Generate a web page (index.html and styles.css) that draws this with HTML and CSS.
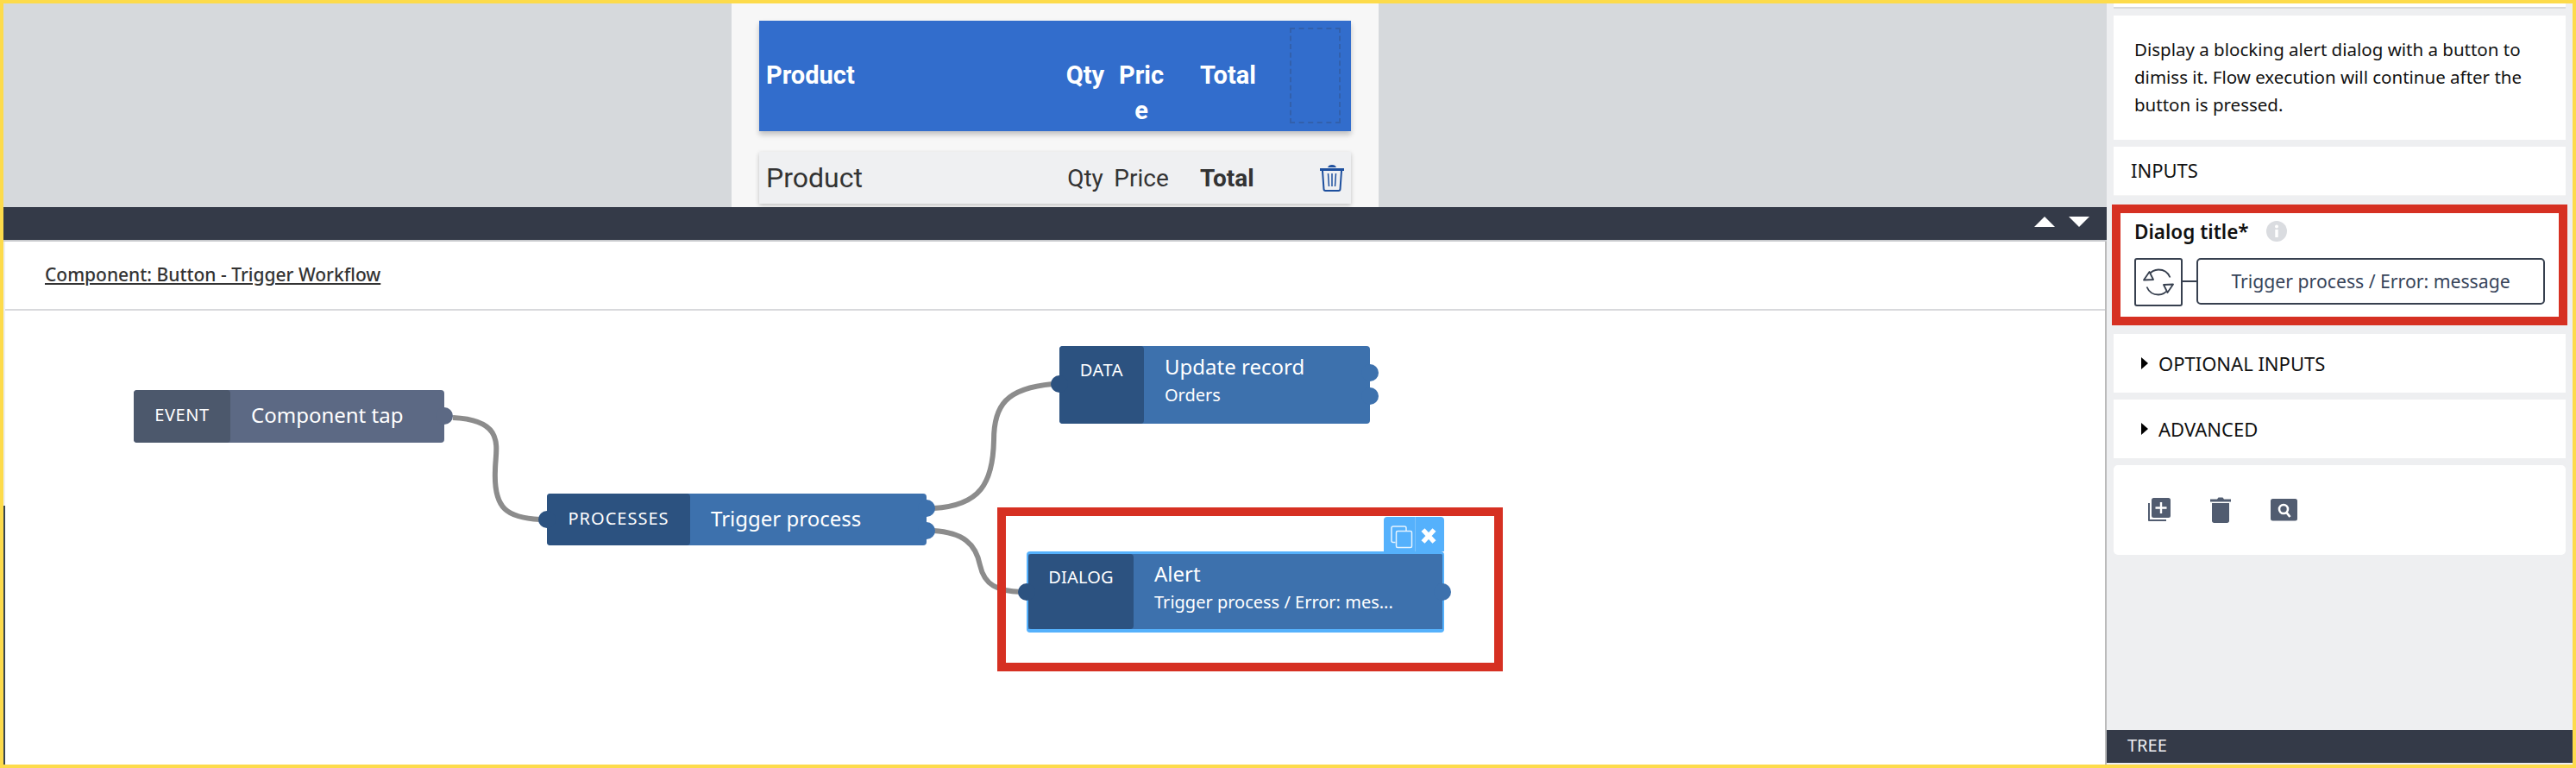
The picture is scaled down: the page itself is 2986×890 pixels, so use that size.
FILE: index.html
```html
<!DOCTYPE html>
<html lang="en">
<head>
	<meta charset="UTF-8">
	<meta name="viewport" content="width=device-width, initial-scale=1.0">
	<title>Flow editor</title>
	<link rel="stylesheet" href="styles.css">
</head>
<body>
<div class="frame">
	<div class="main">
		<div class="preview">
			<div class="phone">
				<div class="line line-head">
					<div>Product</div>
					<div class="mid">Qty</div>
					<div class="mid price-head">Price</div>
					<div class="total">Total</div>
					<div class="drop"></div>
				</div>
				<div class="line line-row">
					<div class="name">Product</div>
					<div class="mid">Qty</div>
					<div class="mid">Price</div>
					<div class="total">Total</div>
					<div class="bin">
						<svg width="28" height="32" viewBox="0 0 28 32" fill="none" stroke="#1d4f9e" stroke-width="2">
							<path d="M0 6.500h28" stroke-width="3"/>
							<path d="M9 4c1-2 2-3 5-3s4 1 5 3z" fill="#1d4f9e" stroke="none"/>
							<path d="M3 8l1.500 21c0 1.500 1 2 2 2h15c1 0 2-.500 2-2L25 8"/>
							<path d="M9.500 11l1 15M14 11v15M18.500 11l-1 15" stroke-width="1.500"/>
						</svg>
					</div>
				</div>
			</div>
		</div>
		<div class="splitter">
			<span class="arrow-up"></span>
			<span class="arrow-down"></span>
		</div>
		<div class="flow">
			<div class="flow-title"><a>Component: Button - Trigger Workflow</a></div>
			<div class="canvas">
				<svg class="wires" width="2434" height="526" fill="none" stroke="#8c8c8c" stroke-width="6">
					<!-- coords are canvas relative -->
					<path d="M519 124C582 127 568 160 568 185C566 230 582 240 620 242"/>
					<path d="M1076 229C1130 226 1145 200 1146 150C1146 110 1160 90 1214 85"/>
					<path d="M1076 255C1110 257 1125 270 1130 295C1135 318 1150 325 1178 326"/>
				</svg>

				<div class="node node-event">
					<div class="tag">EVENT</div>
					<div class="body"><div class="title">Component tap</div></div>
					<span class="port port-out1"></span>
				</div>

				<div class="node node-process">
					<div class="tag">PROCESSES</div>
					<div class="body"><div class="title">Trigger process</div></div>
					<span class="port port-in"></span>
					<span class="port port-out1"></span>
					<span class="port port-out2"></span>
				</div>

				<div class="node node-data">
					<div class="tag">DATA</div>
					<div class="body">
						<div class="title">Update record</div>
						<div class="sub">Orders</div>
					</div>
					<span class="port port-in"></span>
					<span class="port port-out1"></span>
					<span class="port port-out2"></span>
				</div>

				<div class="node node-dialog">
					<div class="tag">DIALOG</div>
					<div class="body">
						<div class="title">Alert</div>
						<div class="sub">Trigger process / Error: mes...</div>
					</div>
					<span class="port port-in"></span>
					<span class="port port-out1"></span>
					<div class="node-tools">
						<div class="tool tool-copy">
							<svg width="28" height="28" viewBox="0 0 28 28" fill="none" stroke="#fff" stroke-width="1.500" opacity=".85">
								<path d="M6.500 20.500H4c-1 0-2-1-2-2V4c0-1 1-2 2-2h13c1 0 2 1 2 2v3"/>
								<rect x="7.500" y="7.500" width="18" height="19" rx="1.500"/>
							</svg>
						</div>
						<div class="tool tool-close">
							<svg width="18" height="20" viewBox="0 0 18 20" fill="none" stroke="#fff" stroke-width="5.500">
								<path d="M2.500 3l13 14M15.500 3l-13 14"/>
							</svg>
						</div>
					</div>
				</div>

				<div class="mark"></div>
				<div class="strip"></div>
			</div>
		</div>
	</div>

	<div class="side">
		<div class="side-top"></div>
		<div class="card card-desc">Display a blocking alert dialog with a button to dimiss it. Flow execution will continue after the button is pressed.</div>
		<div class="card card-inputs">INPUTS</div>
		<div class="field">
			<div class="field-label">
				Dialog title*
				<svg class="info" width="24" height="24" viewBox="0 0 24 24">
					<circle cx="12" cy="12" r="12" fill="#dadce0"/>
					<rect x="10.300" y="10" width="3.400" height="9" fill="#fff"/>
					<circle cx="12" cy="6.500" r="2" fill="#fff"/>
				</svg>
			</div>
			<div class="field-row">
				<div class="bind">
					<svg width="36" height="32" viewBox="0 0 36 32" fill="none" stroke="#37404f" stroke-width="1.800" stroke-linejoin="round">
						<path d="M6 8C10 3 14 1.500 18 1.500c6 0 11 3 13.500 9"/>
						<path d="M30 24c-4 5-8 6.500-12 6.500-6 0-11-3-13.500-9"/>
						<path d="M7.500 4L1 13.500l11 -.500z" fill="#fff"/>
						<path d="M28.500 28L35 18.500l-11 .500z" fill="#fff"/>
					</svg>
				</div>
				<div class="bind-link"></div>
				<div class="bind-value">Trigger process / Error: message</div>
			</div>
		</div>
		<div class="card card-fold"><span class="caret"></span>OPTIONAL INPUTS</div>
		<div class="card card-fold"><span class="caret"></span>ADVANCED</div>
		<div class="card card-actions">
			<svg width="28" height="29" viewBox="0 0 28 29">
				<path d="M2 6v20c0 .500.500 1 1 1h20v-2H4V6z" fill="#515c70"/>
				<rect x="6" y="0" width="22" height="23" rx="2.500" fill="#515c70"/>
				<path d="M17 5v13M10.500 11.500h13" stroke="#fff" stroke-width="2.400" fill="none"/>
			</svg>
			<svg width="24" height="30" viewBox="0 0 24 30">
				<path d="M0 2.500h8L9.500 .500h5L16 2.500h8v3H0z" fill="#515c70"/>
				<path d="M2 7h20v20.500c0 1.500-1 2.500-2.500 2.500h-15C3 30 2 29 2 27.500z" fill="#515c70"/>
			</svg>
			<svg width="31" height="26" viewBox="0 0 31 26">
				<rect x="0" y="0" width="31" height="25.500" rx="2.500" fill="#515c70"/>
				<circle cx="15" cy="12" r="5" fill="none" stroke="#fff" stroke-width="2.600"/>
				<path d="M18.500 16l4 5" stroke="#fff" stroke-width="2.800" fill="none"/>
			</svg>
		</div>
		<div class="side-space"></div>
		<div class="tree-bar">TREE</div>
	</div>
</div>
</body>
</html>
```

FILE: styles.css
```css
* {
    padding: 0;
    margin: 0;
    box-sizing: border-box;
}

body {
    width: 2986px;
    height: 890px;
    overflow: hidden;
    font-family: "Noto Sans", "Open Sans", sans-serif;
    background: #fff;
}

.frame {
    width: 2986px;
    height: 890px;
    border: 4px solid #fddb4b;
    display: flex;
}

.main {
    width: 2438px;
    display: flex;
    flex-direction: column;
}

/* app preview */
.preview {
    height: 236px;
    background: #d6d9dc;
    padding-left: 844px;
    overflow: hidden;
}

.phone {
    width: 750px;
    height: 236px;
    background: #f7f7f7;
    padding: 20px 32px 0;
}

.line {
    display: grid;
    grid-template-columns: 338px 64px 66px 139px 59px;
    padding: 0 12px 0 8px;
    align-items: center;
}

.line-head {
    height: 128px;
    padding-top: 43px;
    align-items: start;
    background: #326dcc;
    color: #fff;
    font-family: Roboto, sans-serif;
    font-weight: 700;
    font-size: 29px;
    line-height: 41px;
    box-shadow: 0 4px 6px rgba(0, 0, 0, .22);
}

.line-row {
    height: 60px;
    margin-top: 24px;
    background: #eff0f2;
    color: #333;
    font-family: Roboto, sans-serif;
    font-size: 28px;
    box-shadow: 0 2px 5px rgba(0, 0, 0, .22);
}

.mid {
    text-align: center;
}

.price-head {
    padding: 0 5px;
    word-break: break-all;
}

.total {
    padding-left: 35px;
    font-weight: 700;
}

.line-row .name {
    font-size: 32px;
}

.drop {
    height: 111px;
    margin-top: -35px;
    border: 2px dashed rgba(50, 60, 80, .25);
}

.bin {
    padding-left: 35px;
    height: 32px;
}

/* splitter bar */
.splitter {
    height: 40px;
    background: #343a48;
    border-bottom: 2px solid #c9cbce;
    display: flex;
    justify-content: flex-end;
    gap: 16px;
    padding: 11px 20px 0 0;
}

.arrow-up {
    width: 0;
    height: 0;
    border-left: 12px solid transparent;
    border-right: 12px solid transparent;
    border-bottom: 12px solid #fff;
}

.arrow-down {
    width: 0;
    height: 0;
    border-left: 12px solid transparent;
    border-right: 12px solid transparent;
    border-top: 12px solid #fff;
}

/* flow area */
.flow {
    flex: 1;
    display: flex;
    flex-direction: column;
    background: #fff;
    border-left: 2px solid #eeeff1;
    border-right: 2px solid #bbb;
}

.flow-title {
    height: 80px;
    border-bottom: 2px solid #d8d9dc;
    padding: 0 46px;
    line-height: 76px;
    font-size: 21px;
    font-weight: 500;
    color: #333;
}

.flow-title a {
    text-decoration: underline;
}

.canvas {
    flex: 1;
    position: relative;
}

.wires {
    position: absolute;
    left: 0;
    top: 0;
}

.strip {
    position: absolute;
    left: -2px;
    top: 226px;
    bottom: 0;
    width: 2px;
    background: #374551;
}

.node {
    position: absolute;
    display: flex;
    background: #3d71ad;
    border-radius: 4px;
    color: #fff;
}

.tag {
    background: #2c5280;
    border-radius: 4px;
    padding-top: 16px;
    text-align: center;
    font-size: 20px;
    line-height: 26px;
    letter-spacing: .6px;
}

.body {
    flex: 1;
    padding: 13px 0 0 24px;
}

.title {
    font-size: 24px;
    line-height: 32px;
}

.sub {
    margin-top: 1px;
    font-size: 20px;
    line-height: 32px;
}

.port {
    position: absolute;
    width: 20px;
    height: 20px;
    border-radius: 50%;
    background: #3d71ad;
}

.port-in {
    background: #2c5280;
    left: -10px;
}

.port-out1,
.port-out2 {
    right: -10px;
}

.node-event {
    left: 149px;
    top: 92px;
    width: 360px;
    height: 61px;
    background: #5c6984;
}

.node-event .tag {
    width: 112px;
    background: #4c586c;
}

.node-event .port {
    background: #5c6984;
    top: 20px;
}

.node-process {
    left: 628px;
    top: 212px;
    width: 440px;
    height: 60px;
}

.node-process .tag {
    width: 166px;
    letter-spacing: 1px;
}

.node-process .port-in {
    top: 20px;
}

.node-process .port-out1 {
    top: 7px;
}

.node-process .port-out2 {
    top: 33px;
}

.node-data {
    left: 1222px;
    top: 41px;
    width: 360px;
    height: 90px;
}

.node-data .tag {
    width: 98px;
    padding-top: 15px;
}

.node-data .body {
    padding: 8px 0 0 24px;
}

.node-data .port-in {
    top: 34px;
}

.node-data .port-out1 {
    top: 21px;
}

.node-data .port-out2 {
    top: 48px;
}

.node-dialog {
    left: 1184px;
    top: 279px;
    width: 484px;
    height: 94px;
    border: solid #55b1fc;
    border-width: 3px 2px 4px;
}

.node-dialog .tag {
    width: 122px;
    padding-top: 14px;
    letter-spacing: .2px;
}

.node-dialog .body {
    padding: 7px 0 0 24px;
}

.node-dialog .port-in {
    left: -12px;
    top: 34px;
}

.node-dialog .port-out1 {
    right: -10px;
    top: 34px;
}

.node-tools {
    position: absolute;
    right: -2px;
    top: -43px;
    width: 70px;
    height: 40px;
    background: #55b1fc;
    border-radius: 4px 4px 0 0;
    display: flex;
}

.tool {
    display: flex;
}

.tool-copy {
    width: 37px;
    padding: 9px 0 0 7px;
    border-right: 1px solid #7dc3fc;
}

.tool-close {
    flex: 1;
    padding: 12px 0 0 6px;
}

/* red highlight drawn over the canvas */
.mark {
    position: absolute;
    left: 1150px;
    top: 228px;
    width: 586px;
    height: 190px;
    border: 10px solid #d63022;
}

/* right panel */
.side {
    width: 540px;
    background: #eeeff1;
    padding: 0 8px;
    display: flex;
    flex-direction: column;
    font-size: 22px;
    color: #111;
}

.side-top {
    height: 6px;
    margin-bottom: 8px;
    background: #fff;
    border-bottom: 2px solid #d8d9dc;
}

.card {
    background: #fff;
}

.card-desc {
    height: 144px;
    padding: 23px 24px 0;
    font-size: 20.500px;
    line-height: 32px;
}

.card-inputs {
    height: 57px;
    margin-top: 8px;
    padding-left: 20px;
    line-height: 54px;
    border-bottom: 1px solid #f4f4f4;
}

.field {
    margin: 10px -2px 0;
    height: 140px;
    border: 10px solid #d63022;
    background: #fff;
    padding: 4px 16px 0;
}

.field-label {
    display: flex;
    align-items: center;
    gap: 20px;
    height: 34px;
    font-size: 22.500px;
    font-weight: 600;
}

.field-row {
    display: flex;
    align-items: flex-start;
    margin-top: 14px;
}

.bind {
    width: 56px;
    height: 56px;
    border: 2px solid #37404f;
    border-radius: 3px;
    display: flex;
    align-items: center;
    justify-content: center;
}

.bind-link {
    width: 16px;
    height: 2px;
    margin-top: 26px;
    background: #37404f;
}

.bind-value {
    width: 404px;
    height: 54px;
    border: 2px solid #37404f;
    border-radius: 5px;
    text-align: center;
    font-size: 21.200px;
    line-height: 50px;
    color: #37445a;
}

.card-fold {
    height: 68px;
    margin-top: 10px;
    padding-left: 32px;
    display: flex;
    align-items: center;
    gap: 12px;
}

.card-fold + .card-fold {
    margin-top: 8px;
}

.caret {
    width: 0;
    height: 0;
    border-left: 8px solid #000;
    border-top: 7.500px solid transparent;
    border-bottom: 7.500px solid transparent;
}

.card-actions {
    height: 104px;
    margin-top: 8px;
    border-radius: 5px;
    display: flex;
    align-items: center;
    padding-left: 38px;
    gap: 46px;
}

.side-space {
    flex: 1;
}

.tree-bar {
    margin: 0 -8px 2px;
    height: 38px;
    background: #343a48;
    color: #eceef2;
    padding-left: 24px;
    line-height: 36px;
    font-size: 20px;
}
```
